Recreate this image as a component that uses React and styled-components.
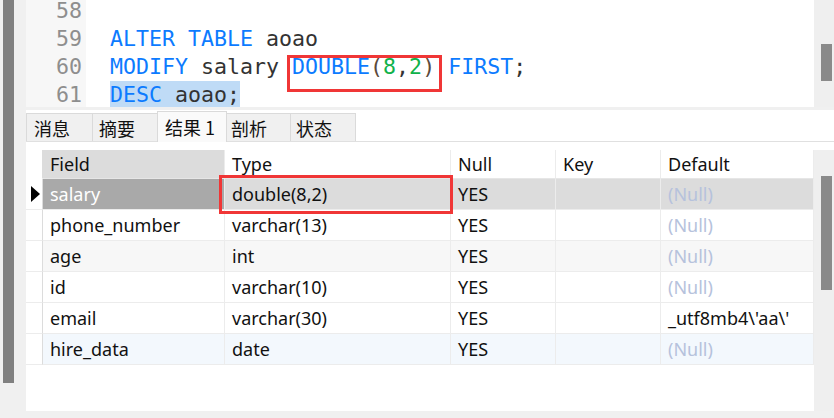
import React from "react";
import styled, { createGlobalStyle } from "styled-components";

const Global = createGlobalStyle`
  html, body { margin: 0; padding: 0; background: #f0f0f0; }
  body { font-family: "Noto Sans", "Noto Sans CJK SC", sans-serif; }
  * { box-sizing: border-box; }
`;

const Page = styled.div`
  width: 834px;
  height: 418px;
  display: flex;
  background: #f0f0f0;
  overflow: hidden;
`;

const Rail = styled.div`
  width: 26px;
  flex: none;
  padding-left: 3px;
`;

const RailThumb = styled.div`
  width: 11px;
  height: 383px;
  background: #808080;
`;

const Main = styled.div`
  flex: 1;
  display: flex;
  flex-direction: column;
`;

const Editor = styled.div`
  height: 107px;
  display: flex;
  flex: none;
`;

const EditorBody = styled.div`
  flex: 1;
  background: #fff;
  display: flex;
  overflow: hidden;
  font-family: "DejaVu Sans Mono", "Liberation Mono", monospace;
  font-size: 21.6px;
`;

const Gutter = styled.div`
  width: 60px;
  background: #f7f7f7;
  padding-right: 4px;
  text-align: right;
  color: #8e8e8e;
`;

const Code = styled.div`
  flex: 1;
  padding-left: 24px;
  color: #333;
`;

const Lines = styled.div`
  margin-top: -3px;
`;

const Line = styled.div`
  height: 28px;
  line-height: 28px;
  white-space: pre;
`;

const Kw = styled.span`
  color: #0c7bff;
`;
const Num = styled.span`
  color: #0fb24a;
`;
const Paren = styled.span`
  color: #5b4a3c;
`;

const Selected = styled.span`
  display: inline-block;
  height: 28px;
  vertical-align: top;
  background: #bfdbf6;
`;

const Boxed = styled.span`
  position: relative;
  display: inline-block;
  height: 28px;
  vertical-align: top;
  &::after {
    content: "";
    position: absolute;
    left: -5px;
    top: 2px;
    width: 149px;
    height: 31px;
    border: 3px solid #f03636;
  }
`;

const VScroll = styled.div`
  width: 20px;
  flex: none;
  background: #efefef;
  padding-left: 7px;
  padding-top: ${(p) => p.$top}px;
`;

const Thumb = styled.div`
  width: 11px;
  height: ${(p) => p.$h}px;
  background: #8a8a8a;
`;

const Gap = styled.div`
  height: 3px;
  flex: none;
`;

const Results = styled.div`
  height: 301px;
  background: #fff;
  display: flex;
  flex-direction: column;
  flex: none;
`;

const TabStrip = styled.div`
  height: 32px;
  display: flex;
  align-items: flex-end;
  border-bottom: 1px solid #e0e0e0;
  flex: none;
`;

const Tab = styled.div`
  width: ${(p) => p.$w}px;
  height: ${(p) => (p.$active ? 31 : 28)}px;
  margin-bottom: ${(p) => (p.$active ? -1 : 0)}px;
  background: ${(p) => (p.$active ? "#fafafa" : "#f0f0f0")};
  border: 1px solid #dadada;
  border-bottom: none;
  margin-left: -1px;
  &:first-child { margin-left: 0; }
  padding-left: ${(p) => p.$pl}px;
  display: flex;
  align-items: center;
  font-family: "Noto Sans CJK SC", sans-serif;
  font-size: 18px;
  color: #111;
  white-space: pre;
  position: relative;
  z-index: ${(p) => (p.$active ? 1 : 0)};
`;

const Spacer = styled.div`
  height: 8px;
  flex: none;
`;

const TableArea = styled.div`
  flex: 1;
  display: flex;
`;

const Table = styled.div`
  width: 788px;
  flex: none;
  display: grid;
  grid-template-columns: 17px 182px 226px 105px 105px 153px;
  grid-auto-rows: min-content;
  font-family: "Noto Sans", "Noto Sans CJK SC", sans-serif;
  font-size: 18px;
  color: #111;
`;

const Cell = styled.div`
  position: relative;
  height: ${(p) => (p.$head ? 29 : 31)}px;
  line-height: ${(p) => (p.$head ? 28 : 30)}px;
  padding-left: 7px;
  white-space: pre;
  border-bottom: 1px solid ${(p) => (p.$head ? "#e6e6e6" : "#ececec")};
  border-right: 1px solid #ececec;
  background: ${(p) => p.$bg || "transparent"};
  color: ${(p) => (p.$null ? "#b6c2dc" : p.$white ? "#fff" : "#111")};
`;

const Indicator = styled.div`
  height: ${(p) => (p.$head ? 29 : 31)}px;
  border-right: 1px solid #dcdcdc;
  border-bottom: 1px solid ${(p) => (p.$head ? "#fff" : "#ececec")};
  background: #fff;
  position: relative;
`;

const Arrow = styled.div`
  position: absolute;
  left: 5px;
  top: 7px;
  width: 0;
  height: 0;
  border-top: 8px solid transparent;
  border-bottom: 8px solid transparent;
  border-left: 9px solid #000;
`;

const TableBox = styled.div`
  position: absolute;
  left: -6px;
  top: -4px;
  width: 234px;
  height: 39px;
  border: 3px solid #f03636;
  z-index: 2;
`;

const rows = [
  { f: "salary", t: "double(8,2)", n: "YES", k: "", d: null, sel: true },
  { f: "phone_number", t: "varchar(13)", n: "YES", k: "", d: null, bg: "#fff" },
  { f: "age", t: "int", n: "YES", k: "", d: null, bg: "#f7f7f7" },
  { f: "id", t: "varchar(10)", n: "YES", k: "", d: null, bg: "#fff" },
  { f: "email", t: "varchar(30)", n: "YES", k: "", d: "_utf8mb4\\'aa\\'", bg: "#fff" },
  { f: "hire_data", t: "date", n: "YES", k: "", d: null, bg: "#f3f8fd" },
];

const tabs = [
  { label: "消息", w: 67, pl: 7 },
  { label: "摘要", w: 66, pl: 6 },
  { label: "结果 1", w: 70, pl: 7, active: true },
  { label: "剖析", w: 65, pl: 4 },
  { label: "状态", w: 66, pl: 5 },
];

export default function App() {
  return (
    <>
      <Global />
      <Page>
        <Rail>
          <RailThumb />
        </Rail>
        <Main>
          <Editor>
            <EditorBody>
              <Gutter>
                <Lines>
                  <Line>58</Line>
                  <Line>59</Line>
                  <Line>60</Line>
                  <Line>61</Line>
                </Lines>
              </Gutter>
              <Code>
                <Lines>
                  <Line> </Line>
                  <Line>
                    <Kw>ALTER</Kw> <Kw>TABLE</Kw> aoao
                  </Line>
                  <Line>
                    <Kw>MODIFY</Kw> salary{" "}
                    <Boxed>
                      <Kw>DOUBLE</Kw>
                      <Paren>(</Paren>
                      <Num>8</Num>,<Num>2</Num>
                      <Paren>)</Paren>
                    </Boxed>{" "}
                    <Kw>FIRST</Kw>;
                  </Line>
                  <Line>
                    <Selected>
                      <Kw>DESC</Kw> aoao;
                    </Selected>
                  </Line>
                </Lines>
              </Code>
            </EditorBody>
            <VScroll $top={44}>
              <Thumb $h={37} />
            </VScroll>
          </Editor>
          <Gap />
          <Results>
            <TabStrip>
              {tabs.map((t) => (
                <Tab key={t.label} $w={t.w} $pl={t.pl} $active={t.active}>
                  {t.label}
                </Tab>
              ))}
            </TabStrip>
            <Spacer />
            <TableArea>
              <Table>
                <Indicator $head />
                <Cell $head $bg="#dcdcdc">Field</Cell>
                <Cell $head>Type</Cell>
                <Cell $head>Null</Cell>
                <Cell $head>Key</Cell>
                <Cell $head>Default</Cell>
                {rows.map((r) => (
                  <React.Fragment key={r.f}>
                    <Indicator>{r.sel && <Arrow />}</Indicator>
                    <Cell $bg={r.sel ? "#a9a9a9" : r.bg} $white={r.sel}>
                      {r.f}
                    </Cell>
                    <Cell $bg={r.sel ? "#dcdcdc" : r.bg}>
                      {r.t}
                      {r.sel && <TableBox />}
                    </Cell>
                    <Cell $bg={r.sel ? "#dcdcdc" : r.bg}>{r.n}</Cell>
                    <Cell $bg={r.sel ? "#dcdcdc" : r.bg}>{r.k}</Cell>
                    <Cell $bg={r.sel ? "#dcdcdc" : r.bg} $null={r.d === null}>
                      {r.d === null ? "(Null)" : r.d}
                    </Cell>
                  </React.Fragment>
                ))}
              </Table>
              <VScroll $top={26}>
                <Thumb $h={114} />
              </VScroll>
            </TableArea>
          </Results>
        </Main>
      </Page>
    </>
  );
}
